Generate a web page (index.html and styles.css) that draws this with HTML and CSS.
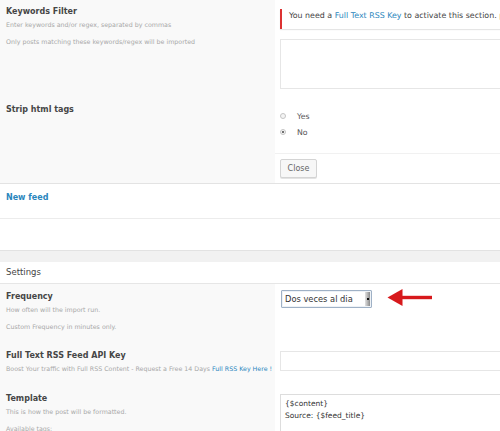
FILE: index.html
```html
<!DOCTYPE html>
<html lang="en">
<head>
<meta charset="utf-8">
<title>Feed settings</title>
<link rel="stylesheet" href="styles.css">
</head>
<body>
<div class="page">
  <section class="form-block">
    <div class="row row-keywords">
      <div class="th">
        <div class="label">Keywords Filter</div>
        <p class="desc first">Enter keywords and/or regex, separated by commas</p>
        <p class="desc">Only posts matching these keywords/regex will be imported</p>
      </div>
      <div class="td">
        <div class="notice">You need a <a class="link">Full Text RSS Key</a> to activate this section. please get one</div>
        <div class="field ta-keywords"></div>
      </div>
    </div>
    <div class="row row-strip">
      <div class="th"><div class="label">Strip html tags</div></div>
      <div class="td td-radios">
        <div class="radio"><span class="dot"></span><span>Yes</span></div>
        <div class="radio"><span class="dot checked"></span><span>No</span></div>
      </div>
    </div>
    <div class="row row-close">
      <div class="th"></div>
      <div class="td td-close"><div class="btn">Close</div></div>
    </div>
  </section>

  <div class="newfeed"><a class="newfeed-link">New feed</a></div>
  <div class="spacer"></div>
  <div class="band"></div>
  <div class="settings-head">Settings</div>

  <section class="form-block">
    <div class="row row-freq">
      <div class="th">
        <div class="label">Frequency</div>
        <p class="desc first">How often will the import run.</p>
        <p class="desc">Custom Frequency in minutes only.</p>
      </div>
      <div class="td td-freq">
        <div class="select">
          <span class="select-text">Dos veces al dia</span>
          <span class="select-btn"><span class="select-caret"></span></span>
        </div>
        <svg class="arrow" width="46" height="18" viewBox="0 0 46 18">
          <polygon points="0.5,9.5 15.5,1 15.5,18" fill="#d7191c"/>
          <rect x="14" y="7.8" width="31" height="3.4" fill="#d7191c"/>
        </svg>
      </div>
    </div>
    <div class="row row-api">
      <div class="th">
        <div class="label">Full Text RSS Feed API Key</div>
        <p class="desc first">Boost Your traffic with Full RSS Content - Request a Free 14 Days <a class="link">Full RSS Key Here !</a></p>
      </div>
      <div class="td td-api">
        <div class="field input-api"></div>
      </div>
    </div>
    <div class="row row-template">
      <div class="th">
        <div class="label">Template</div>
        <p class="desc first">This is how the post will be formatted.</p>
        <p class="desc">Available tags:</p>
      </div>
      <div class="td td-template">
        <div class="field ta-template">
          <div>{$content}</div>
          <div>Source: {$feed_title}</div>
        </div>
      </div>
    </div>
  </section>
</div>
</body>
</html>
```

FILE: styles.css
```css
html, body {
  margin: 0;
  padding: 0;
  overflow: hidden;
  background: #ffffff;
}

.page {
  width: 640px;
  font-family: "DejaVu Sans", "Liberation Sans", sans-serif;
  color: #444444;
}

.form-block {
  border-bottom: 1px solid #e3e3e3;
}

.row {
  display: flex;
}

.th {
  width: 275px;
  flex: none;
  box-sizing: border-box;
  padding: 6px 0 0 6px;
  background: #f9f9f9;
}

.td {
  flex: 1;
  box-sizing: border-box;
  padding-left: 5px;
  background: #ffffff;
}

.label {
  font-size: 8px;
  font-weight: bold;
  line-height: 11px;
  color: #464646;
}

.desc {
  margin: 8px 0 0 0;
  font-size: 6.3px;
  line-height: 9px;
  color: #a8a8a8;
  white-space: nowrap;
}

.desc.first {
  margin-top: 3px;
}

.link {
  color: #2a86bd;
  text-decoration: none;
}

/* Keywords row */
.row-keywords {
  height: 98px;
}

.row-keywords .td {
  padding-top: 9px;
}

.notice {
  box-sizing: border-box;
  height: 20px;
  padding: 1px 0 0 7px;
  border-left: 2px solid #dc3232;
  background: #ffffff;
  box-shadow: 0 1px 1px rgba(0, 0, 0, 0.1);
  font-size: 7.9px;
  line-height: 12px;
  color: #444444;
  white-space: nowrap;
}

.field {
  box-sizing: border-box;
  border: 1px solid #e6e6e6;
  background: #ffffff;
}

.ta-keywords {
  margin-top: 10px;
  height: 50px;
}

/* Strip html tags row */
.row-strip {
  height: 55px;
}

.td-radios {
  padding-top: 10px;
}

.radio {
  display: flex;
  align-items: center;
  height: 16px;
  font-size: 7.8px;
  color: #555555;
}

.dot {
  box-sizing: border-box;
  width: 6px;
  height: 6px;
  margin: 0 11px 0 0;
  border: 1px solid #c4c4c4;
  border-radius: 50%;
  background: #f4f4f4;
  display: flex;
  align-items: center;
  justify-content: center;
}

.dot.checked::after {
  content: "";
  width: 2px;
  height: 2px;
  border-radius: 50%;
  background: #444444;
}

/* Close row */
.row-close {
  height: 30px;
}

.td-close {
  border-top: 1px solid #f1f1f1;
  padding-top: 5px;
}

.btn {
  box-sizing: border-box;
  width: 37px;
  height: 19px;
  border: 1px solid #d4d4d4;
  border-radius: 2px;
  background: #f7f7f7;
  box-shadow: 0 1px 0 #e3e3e3;
  font-size: 8px;
  line-height: 17px;
  text-align: center;
  color: #666666;
}

/* New feed */
.newfeed {
  height: 35px;
  box-sizing: border-box;
  padding: 5px 0 0 6px;
  border-bottom: 1px solid #ececec;
  line-height: 11px;
}

.newfeed-link {
  font-size: 8px;
  font-weight: bold;
  color: #2a86bd;
}

.spacer {
  height: 31px;
  border-bottom: 1px solid #e2e2e2;
}

.band {
  height: 11px;
  background: #f1f1f1;
}

.settings-head {
  height: 22px;
  box-sizing: border-box;
  padding-left: 6px;
  border-bottom: 1px solid #e6e6e6;
  font-size: 8.5px;
  line-height: 21px;
  color: #444444;
}

/* Frequency */
.row-freq {
  height: 60px;
}

.row-freq .th {
  padding-top: 7px;
}

.td-freq {
  padding: 6px 0 0 6px;
  display: flex;
  align-items: flex-start;
}

.select {
  box-sizing: border-box;
  width: 91px;
  height: 18px;
  border: 1px solid #9fb1c6;
  border-radius: 1px;
  background: #ffffff;
  display: flex;
  align-items: stretch;
  box-shadow: inset 0 0 0 1px #eef2f6;
}

.select-text {
  flex: 1;
  padding-left: 3px;
  font-size: 8.3px;
  line-height: 16px;
  color: #333333;
  white-space: nowrap;
}

.select-btn {
  width: 5px;
  margin: 1px 1px 1px 0;
  background: linear-gradient(to right, #e2e2e2, #8a8a8a);
  display: flex;
  align-items: center;
  justify-content: center;
}

.select-caret {
  width: 2px;
  height: 2px;
  background: #111111;
}

.arrow {
  display: block;
  margin: -2px 0 0 15px;
}

/* API key */
.row-api {
  height: 43px;
}

.td-api {
  padding-top: 7px;
}

.input-api {
  height: 20px;
}

/* Template */
.row-template {
  height: 80px;
}

.td-template {
  padding-top: 7px;
}

.ta-template {
  height: 80px;
  padding: 3px 0 0 4px;
  border-color: #dddddd;
  font-size: 7.5px;
  line-height: 11.5px;
  color: #333333;
}
```
